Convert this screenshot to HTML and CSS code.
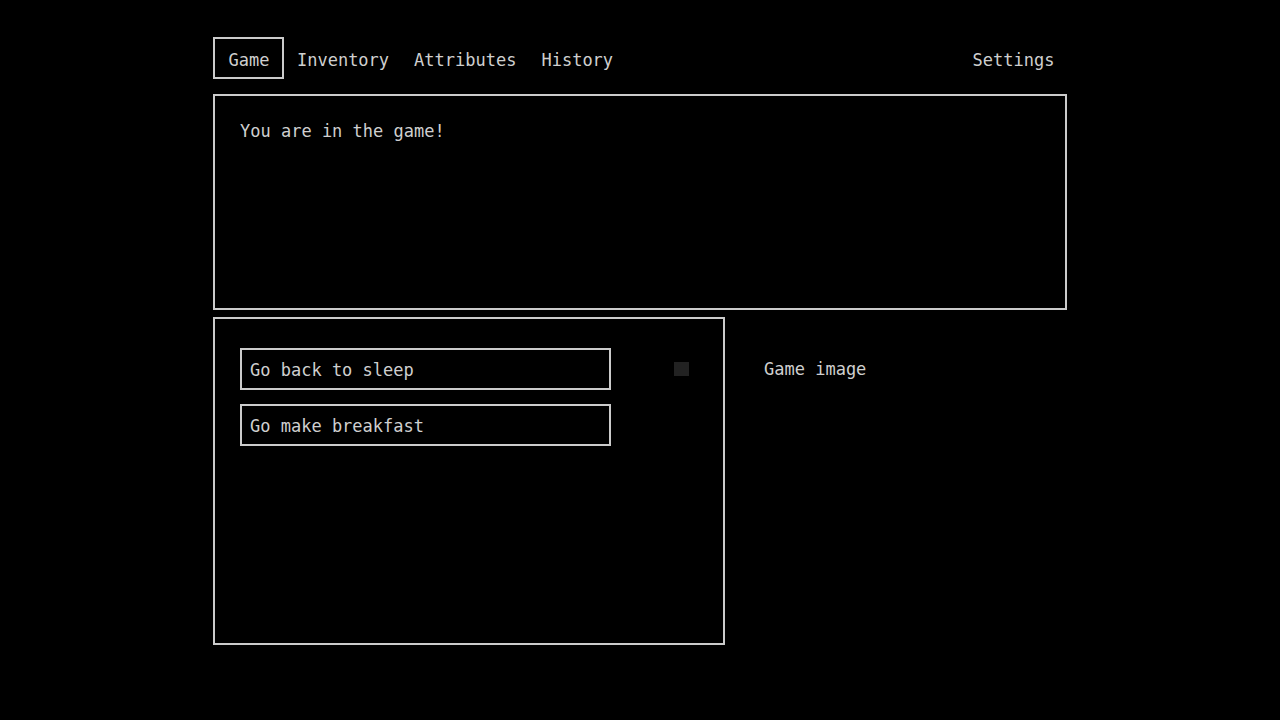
FILE: index.html
```html
<!DOCTYPE html>
<html>
<head>
<meta charset="utf-8">
<link rel="stylesheet" href="styles.css">
</head>
<body>
<div class="app">
  <nav class="nav">
    <div class="tabs">
      <span class="tab active">Game</span>
      <span class="tab">Inventory</span>
      <span class="tab">Attributes</span>
      <span class="tab">History</span>
    </div>
    <span class="tab">Settings</span>
  </nav>
  <section class="story">You are in the game!</section>
  <div class="lower">
    <section class="choices">
      <div class="options">
        <button class="option">Go back to sleep</button>
        <button class="option">Go make breakfast</button>
      </div>
      <div class="marker"></div>
    </section>
    <section class="image">Game image</section>
  </div>
</div>
</body>
</html>
```
FILE: styles.css
```css
html, body {
  margin: 0;
  background: #000;
  color: #cfcfcf;
  font-family: "DejaVu Sans Mono", "Liberation Mono", monospace;
  font-size: 17px;
}
.app {
  width: 854px;
  margin-left: 213px;
  padding-top: 37px;
}
.nav {
  display: flex;
  justify-content: space-between;
  align-items: center;
}
.tabs {
  display: flex;
}
.tab {
  display: block;
  height: 34px;
  line-height: 34px;
  padding: 4px 10.5px 0;
  border: 2px solid transparent;
}
.tab.active {
  border-color: #cbcbcb;
  padding: 4px 13px 0 13.5px;
  margin-right: 0;
}
.story {
  margin-top: 15px;
  height: 189px;
  border: 2px solid #cbcbcb;
  padding: 23px 25px 0;
  line-height: 24px;
}
.lower {
  display: flex;
  margin-top: 7px;
}
.choices {
  width: 512px;
  height: 328px;
  box-sizing: border-box;
  border: 2px solid #cbcbcb;
  display: flex;
  align-items: flex-start;
  padding: 29px 0 0 25px;
}
.options {
  display: flex;
  flex-direction: column;
  gap: 14px;
}
.option {
  width: 371px;
  height: 42px;
  box-sizing: border-box;
  border: 2px solid #cbcbcb;
  background: #000;
  color: #cfcfcf;
  font: inherit;
  text-align: left;
  padding: 2px 8px 0;
  line-height: 36px;
}
.marker {
  width: 15px;
  height: 14px;
  background: #222;
  margin: 14px 0 0 63px;
}
.image {
  padding: 40px 0 0 39px;
  line-height: 24px;
}
```
